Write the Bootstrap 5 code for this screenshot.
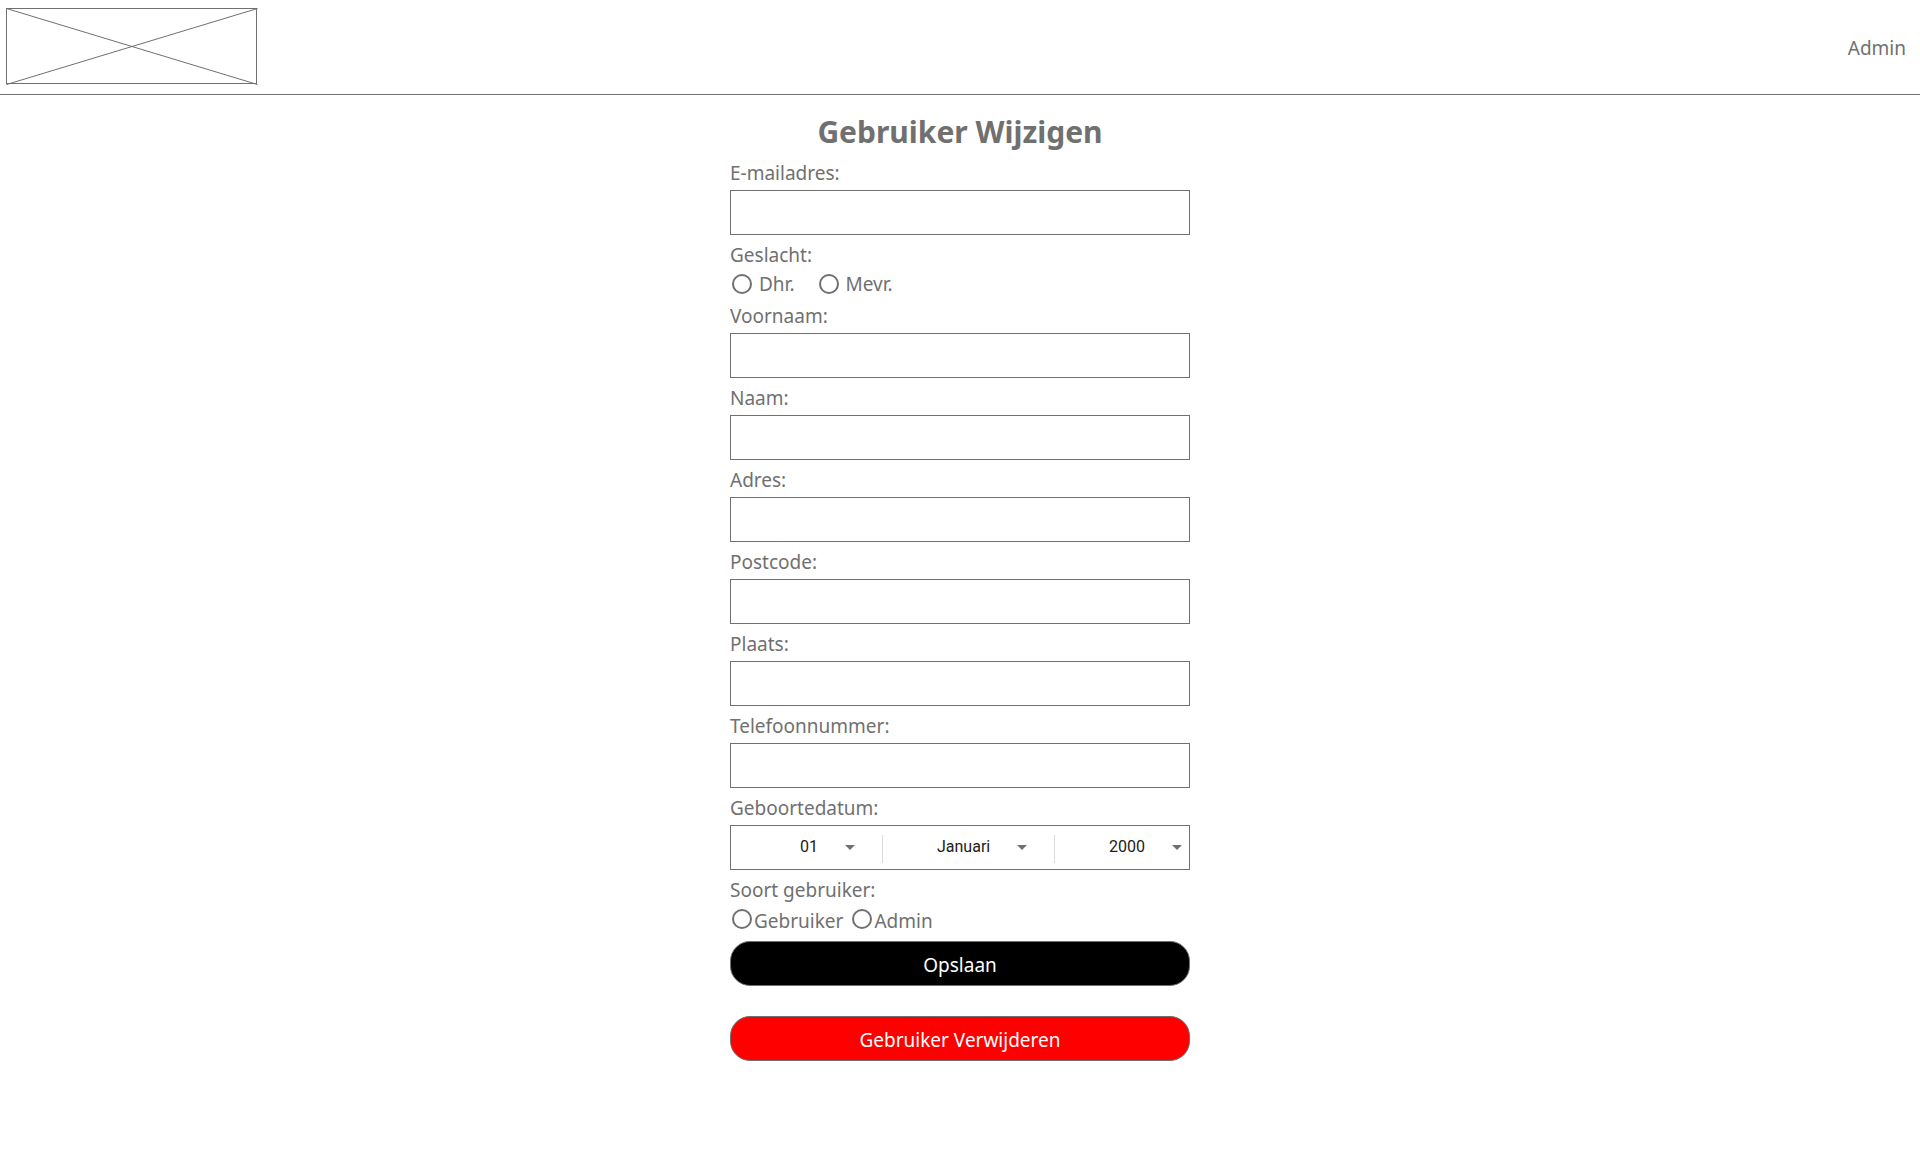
<!DOCTYPE html>
<html lang="nl">
<head>
<meta charset="utf-8">
<meta name="viewport" content="width=device-width, initial-scale=1">
<title>Gebruiker Wijzigen</title>
<link href="https://cdn.jsdelivr.net/npm/bootstrap@5.3.0/dist/css/bootstrap.min.css" rel="stylesheet">
<style>
  :root { --ink: #707070; }
  body { font-family: "Segoe UI", "Noto Sans", sans-serif; font-size: 19px; color: var(--ink); background: #fff; }
  .topbar { border-bottom: 1px solid var(--ink); padding: 8px 14px 9px 6px; }
  .logo-box { width: 252px; height: 77px; }
  .admin-link { color: var(--ink); padding-top: 4px; }
  .user-form { max-width: 460px; }
  .page-title { font-size: 30px; line-height: 42px; padding-top: 16px; }
  .field-label { padding-top: 4px; line-height: 33px; }
  .field-box, .field-box:focus { height: 45px; border: 1px solid var(--ink); border-radius: 0; background: #fff; }
  .choices { height: 24px; line-height: 24px; padding-left: 2px; }
  .choices-wide { column-gap: 24px; }
  .choices-wide .choice { gap: 7px; }
  .choices-tight { column-gap: 9px; margin-bottom: 10px; }
  .choices-tight label { padding-top: 3px; }
  .choice { gap: 2px; }
  .choice .form-check-input { width: 20px; height: 20px; border: 2px solid var(--ink); background-color: #fff; }
  .date-part { position: relative; min-width: 0; }
  .date-part + .date-part::before { content: ""; position: absolute; left: 0; top: 9px; width: 1px; height: 28px; background: #dcdcdc; }
  .date-part select { appearance: none; border: 0; background: transparent; width: 100%; height: 100%; padding: 0 0 3px; font: 16px Roboto, sans-serif; color: #212121; }
  .date-part svg { position: absolute; right: 27px; top: 19px; pointer-events: none; }
  .day { flex: 151; }
  .day select { padding-left: 69px; }
  .month { flex: 172; }
  .month select { padding-left: 55px; }
  .year { flex: 135; }
  .year select { padding-left: 55px; }
  .year svg { right: 7px; }
  .action-btn { height: 45px; border: 1px solid var(--ink); border-radius: 20px; font-size: 19px; line-height: 24px; padding: 3px 12px 0; color: #fff; }
  .save-btn, .save-btn:hover { background: #000; color: #fff; }
  .delete-btn, .delete-btn:hover { background: #f00; color: #fff; margin-top: 30px; }
</style>
<script src="https://cdn.jsdelivr.net/npm/bootstrap@5.3.0/dist/js/bootstrap.bundle.min.js"></script>
</head>
<body>
<header class="topbar d-flex justify-content-between align-items-center">
  <svg class="logo-box" viewBox="0 0 252 77" fill="none" stroke="#707070" role="img" aria-label="Logo">
    <rect x="0.5" y="0.5" width="250" height="75"/>
    <path d="M0.5 0.5 251.500 76.500M251.500 0.500 0.500 76.500"/>
  </svg>
  <a href="#" class="admin-link text-decoration-none">Admin</a>
</header>

<main>
  <form class="user-form mx-auto">
    <h1 class="page-title fw-bold text-center m-0">Gebruiker Wijzigen</h1>

    <label class="field-label d-block" for="email">E-mailadres:</label>
    <input class="field-box form-control" type="email" id="email">

    <div class="field-label" id="geslacht">Geslacht:</div>
    <div class="choices choices-wide d-flex" role="radiogroup" aria-labelledby="geslacht">
      <div class="choice d-flex align-items-center">
        <input class="form-check-input m-0" type="radio" name="geslacht" id="dhr"><label for="dhr">Dhr.</label>
      </div>
      <div class="choice d-flex align-items-center">
        <input class="form-check-input m-0" type="radio" name="geslacht" id="mevr"><label for="mevr">Mevr.</label>
      </div>
    </div>

    <label class="field-label d-block" for="voornaam">Voornaam:</label>
    <input class="field-box form-control" type="text" id="voornaam">
    <label class="field-label d-block" for="naam">Naam:</label>
    <input class="field-box form-control" type="text" id="naam">
    <label class="field-label d-block" for="adres">Adres:</label>
    <input class="field-box form-control" type="text" id="adres">
    <label class="field-label d-block" for="postcode">Postcode:</label>
    <input class="field-box form-control" type="text" id="postcode">
    <label class="field-label d-block" for="plaats">Plaats:</label>
    <input class="field-box form-control" type="text" id="plaats">
    <label class="field-label d-block" for="telefoon">Telefoonnummer:</label>
    <input class="field-box form-control" type="tel" id="telefoon">

    <label class="field-label d-block" for="dag">Geboortedatum:</label>
    <div class="field-box d-flex">
      <div class="date-part day">
        <select id="dag"><option>01</option></select>
        <svg width="10" height="5" viewBox="0 0 10 5" fill="#707070"><path d="M0 0h10L5 5z"/></svg>
      </div>
      <div class="date-part month">
        <select aria-label="Maand"><option>Januari</option></select>
        <svg width="10" height="5" viewBox="0 0 10 5" fill="#707070"><path d="M0 0h10L5 5z"/></svg>
      </div>
      <div class="date-part year">
        <select aria-label="Jaar"><option>2000</option></select>
        <svg width="10" height="5" viewBox="0 0 10 5" fill="#707070"><path d="M0 0h10L5 5z"/></svg>
      </div>
    </div>

    <div class="field-label" id="soort">Soort gebruiker:</div>
    <div class="choices choices-tight d-flex" role="radiogroup" aria-labelledby="soort">
      <div class="choice d-flex align-items-center">
        <input class="form-check-input m-0" type="radio" name="soort" id="gebruiker"><label for="gebruiker">Gebruiker</label>
      </div>
      <div class="choice d-flex align-items-center">
        <input class="form-check-input m-0" type="radio" name="soort" id="admin"><label for="admin">Admin</label>
      </div>
    </div>

    <button type="submit" class="action-btn save-btn btn d-block w-100">Opslaan</button>
    <button type="button" class="action-btn delete-btn btn d-block w-100">Gebruiker Verwijderen</button>
  </form>
</main>
</body>
</html>
